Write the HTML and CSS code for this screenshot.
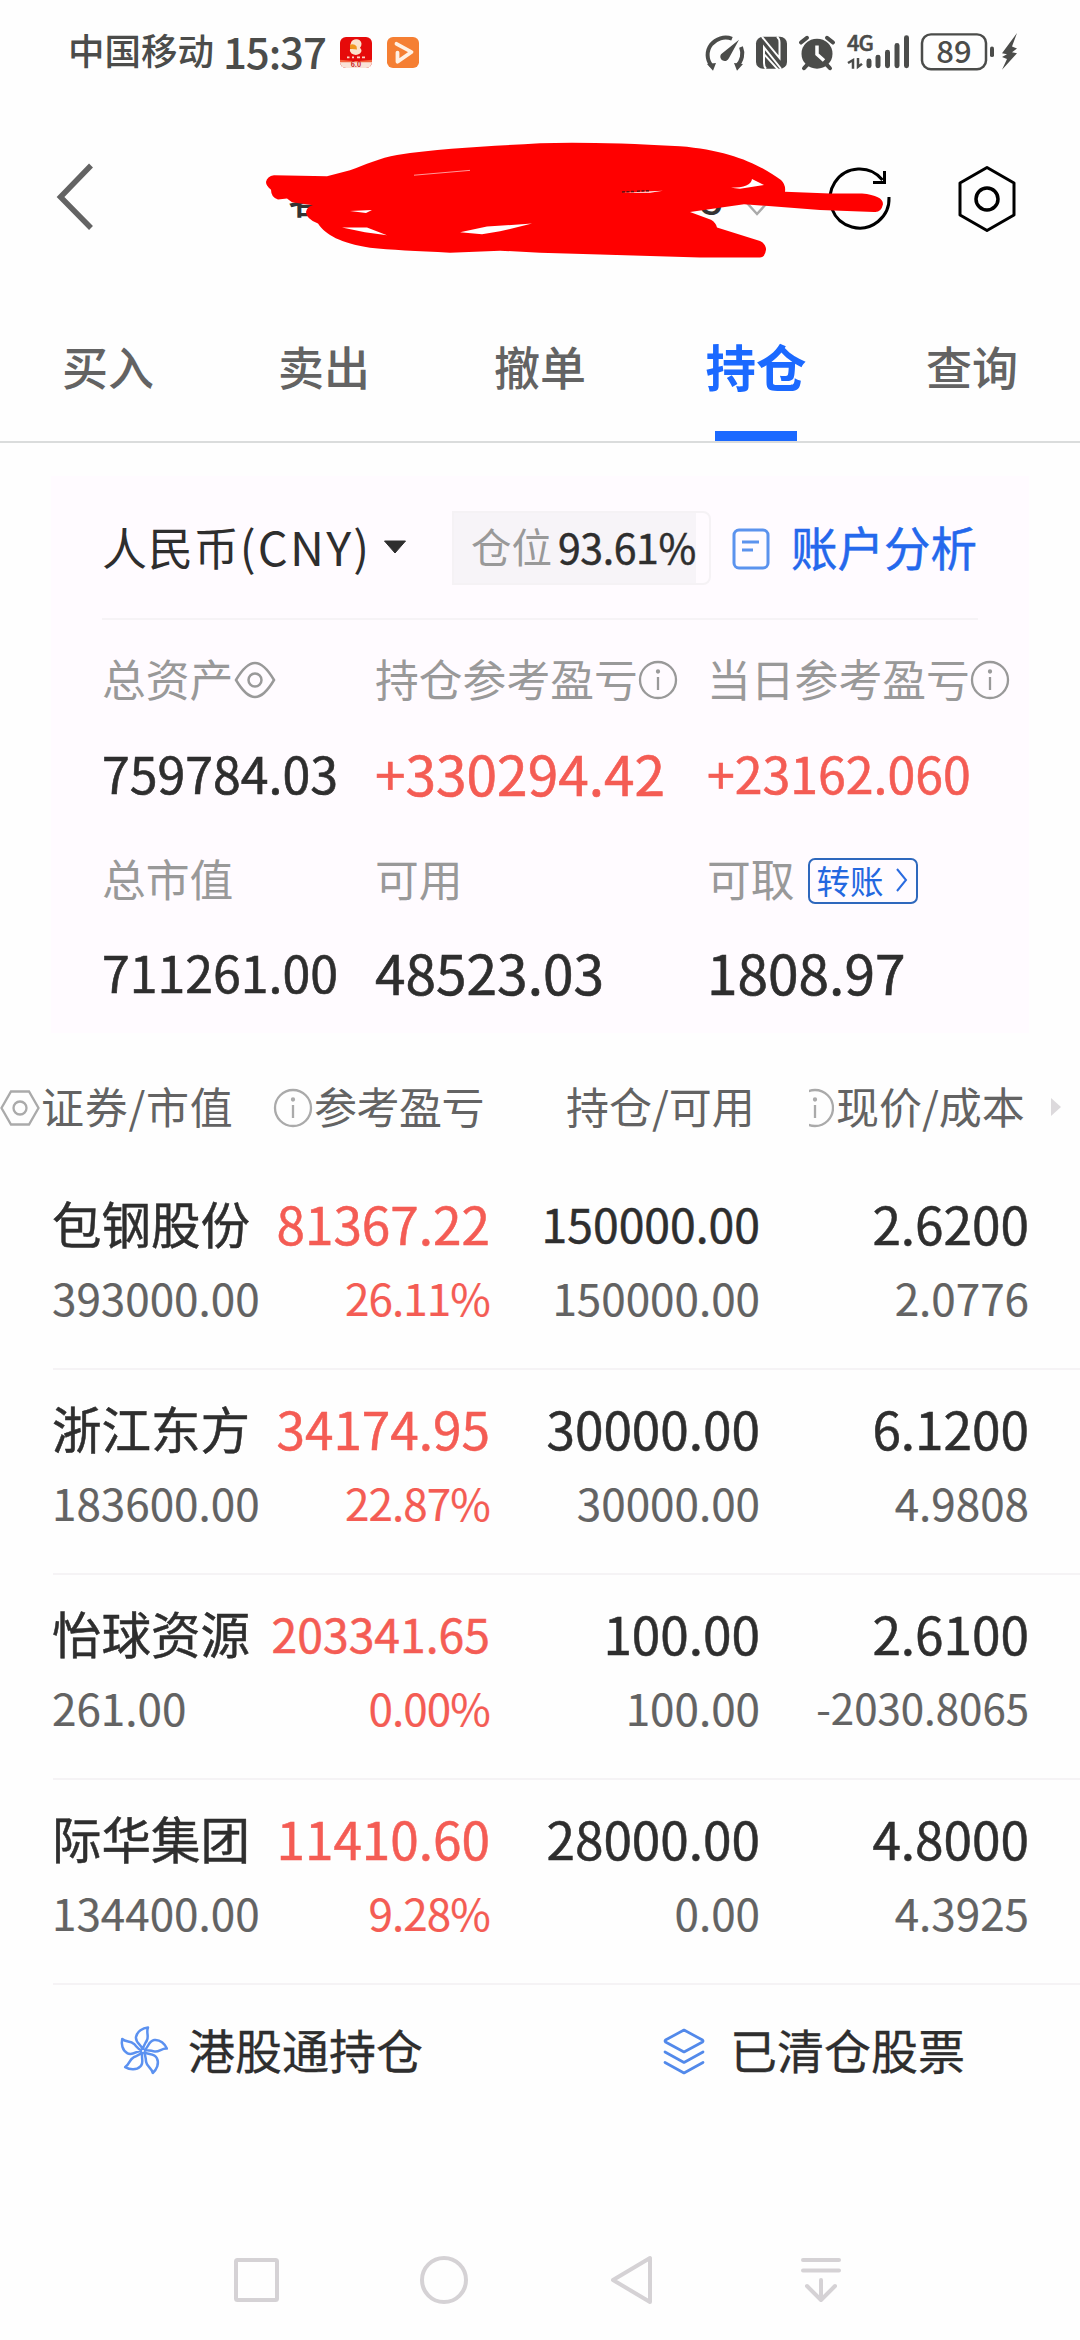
FILE: index.html
```html
<!DOCTYPE html>
<html lang="zh-CN">
<head>
<meta charset="utf-8">
<title>持仓</title>
<link rel="stylesheet" href="styles.css">
</head>
<body>
<div class="screen">
  <div class="status">
    <span class="carrier">中国移动</span><span class="clock">15:37</span>
    <svg class="app-red" width="32" height="31" viewBox="0 0 32 32" preserveAspectRatio="none"><rect width="32" height="32" rx="6" fill="#e60a0a"/><path d="M0 25h32v1a6 6 0 0 1-6 6H6a6 6 0 0 1-6-6z" fill="#f9e3d8"/><path d="M0 23.500L16 25L32 23.500V26H0z" fill="#f2613c"/><path d="M11 6C12 1 21 1 21.500 7Q21.500 10 20 11Q23 14 20 17Q16 20 11.500 17Q9 15 10 12.500L15 12L10 9z" fill="#fbe3cc"/><path d="M10 8Q14 6.500 16.500 9.500L17 13L10 12z" fill="#f0961e"/><path d="M7 21h2.500M12 21h2M17 21h3M22 21h3" stroke="#fbd3c4" stroke-width="1.800"/><text x="16" y="31" font-size="7" text-anchor="middle" class="app-ver">6.0</text></svg>
    <svg class="app-orange" width="32" height="31" viewBox="0 0 32 32" preserveAspectRatio="none"><rect width="32" height="32" rx="6" fill="#f57f33"/><path d="M9.500 7L24.500 15.500L10.500 25.500V16" fill="none" stroke="#fff1e4" stroke-width="3.800" stroke-linecap="round" stroke-linejoin="round"/></svg>
    <svg class="status-icons" width="320" height="44" viewBox="702 33.060 320 45.450" preserveAspectRatio="none" fill="none" stroke="#4b4c4a">
      <path d="M711.500 68A18 18 0 0 1 732 40M741 48.500A18 18 0 0 1 737 68" stroke-width="4"/><path d="M707 66l9-1-3 8zM743 66l-9-1 3 8z" fill="#4b4c4a" stroke="none"/><path d="M739 41L729 60A4.500 4.500 0 1 1 721 56z" fill="#4b4c4a" stroke="none"/>
      <rect x="756" y="38" width="31" height="33" rx="7" fill="#4b4c4a" stroke="none"/><path d="M762 38L779.500 60V44Q779.500 40 777 38M781 71L764 49V65Q764 69 766 71M764 56L778 72" stroke="#fff" stroke-width="2"/>
      <circle cx="817" cy="55.500" r="15.500" fill="#4b4c4a" stroke="none"/><path d="M801 44l6-5M833 44l-6-5M808 66l-4 4.500M826 66l4 4.500" stroke-width="4" stroke-linecap="round"/><path d="M817 47v9l7 6.500" stroke="#fff" stroke-width="3.500"/>
      <text x="847" y="53" class="net">4G</text>
      <path d="M853 71V62l-5 3M858 60v9l4-3" stroke-width="2.500"/>
      <path d="M869 63v5M878 59v9M887.500 54v14M897 47v21M906.500 39v29" stroke-width="5" stroke-linecap="round"/>
      <rect x="922" y="35.500" width="64" height="36" rx="9" stroke-width="2.500"/><path d="M992 50v7" stroke-width="4" stroke-linecap="round"/>
      <text x="954" y="65" text-anchor="middle" class="batt">89</text>
      <path d="M1017 34l-15 21 5 1-5 3 5 2-5 11 15-17-5-1 5-4-5-2z" fill="#4b4c4a" stroke="none"/>
    </svg>
  </div>

  <div class="titlebar">
    <svg width="1080" height="150" viewBox="0 130 1080 150" fill="none">
      <path d="M91 165.500L60.500 197L91 228" stroke="#636363" stroke-width="5.500"/>
      <text x="288" y="214" class="acct">客</text><text x="699" y="214" class="acct">8</text>
      <path d="M747 203l10 11 10-11" stroke="#aaa" stroke-width="2.500"/>
      <path d="M882.500 180A29.500 29.500 0 1 0 889 197" stroke="#000" stroke-width="3"/><path d="M884.500 171v11.500h-11.500" stroke="#000" stroke-width="3"/>
      <path d="M987 167.500L1014 183V215L987 230.500L960 215V183z" stroke="#000" stroke-width="3" stroke-linejoin="round"/><circle cx="987" cy="199" r="11" stroke="#000" stroke-width="3.500"/>
      <g transform="scale(1 .968)">
      <path d="M274 181L327 182L350 176C365 170 380 163 397 160C440 153 490 151 540 148Q590 146 680 151C730 155 760 170 781 186Q786 191 785 198L830 200L862 200Q883 202 883 211Q881 220 874 219L820 217L744 211L690 219L711 227Q716 230 717 235L760 249Q766 252 766 258Q765 266 760 266L700 266L600 263L540 261L500 259L450 261Q400 259 370 256C340 251 326 243 318 231Q306 226 306 219Q307 213 313 212L292 209L287 205L278 206Q271 204 271 196Q266 192 266 188Q267 182 274 181z" fill="#f00"/>
      <path d="M342 235H367L387 243L365 240zM460 240L487 234L532 231L500 239L482 242zM350 218L372 217L366 220zM752 185L764 191L740 195L731 194Q751 194 752 185zM621 199L663 197L650 199zM704 195L717 195z" fill="#fff"/><path d="M414 181L470 176" stroke="#ff9c9c"/>
      </g>
      <path d="M622 192l12-.6M637 191.200l13-.6" stroke="#5a1010" stroke-width="1.500" stroke-dasharray="3 1.500"/>
    </svg>
  </div>

  <nav class="tabs"><span>买入</span><span>卖出</span><span>撤单</span><span class="active">持仓</span><span>查询</span></nav>

  <section class="card">
    <div class="cardtop">
      <span class="cur">人民币<span class="code">(CNY)</span></span><svg class="tri" width="24" height="14" viewBox="0 0 24 14"><path d="M1.500 1h21L12 13z" fill="#2e2e2e" stroke="#2e2e2e" stroke-linejoin="round"/></svg>
      <div class="ratio"><div class="fill"><span class="rl">仓位</span><span class="rv">93.61%</span></div></div>
      <svg class="note" width="38" height="42" viewBox="0 0 38 42" fill="none" stroke="#5b93ee" stroke-width="3"><rect x="2" y="2" width="34" height="38" rx="5"/><path d="M10 14h17M10 22h11"/></svg>
      <span class="link">账户分析</span>
    </div>
    <div class="grid labels">
      <div>总资产<svg class="eye" width="42" height="38" viewBox="0 0 42 38" fill="none" stroke="#999" stroke-width="2.500"><path d="M2 19Q12 2 21 2T40 19Q30 36 21 36T2 19z"/><circle cx="21" cy="19" r="6.500"/></svg></div>
      <div>持仓参考盈亏<svg class="info" width="40" height="40" viewBox="0 0 40 40" fill="none" stroke="#999" stroke-width="2.300"><circle cx="20" cy="20" r="18"/><path d="M20 17v13"/><circle cx="20" cy="11.500" r="1" /></svg></div>
      <div>当日参考盈亏<svg class="info" width="40" height="40" viewBox="0 0 40 40" fill="none" stroke="#999" stroke-width="2.300"><circle cx="20" cy="20" r="18"/><path d="M20 17v13"/><circle cx="20" cy="11.500" r="1" /></svg></div>
    </div>
    <div class="grid values"><div>759784.03</div><div class="big red">+330294.42</div><div class="red">+23162.060</div></div>
    <div class="grid labels second"><div>总市值</div><div>可用</div><div>可取<span class="transfer">转账<svg width="12" height="24" viewBox="0 0 12 24" fill="none" stroke="#2a6be0" stroke-width="2"><path d="M1 1l9 11L1 23"/></svg></span></div></div>
    <div class="grid values last"><div>711261.00</div><div class="big">48523.03</div><div class="big">1808.97</div></div>
  </section>

  <div class="thead">
    <div class="h1"><svg width="40" height="40" viewBox="0 0 40 40" fill="none" stroke="#aaa" stroke-width="2.300"><path d="M11 3.500H29L38.500 20L29 36.500H11L1.500 20z"/><circle cx="20" cy="20" r="6.500"/></svg><span>证券/市值</span></div>
    <div class="h2"><svg width="40" height="40" viewBox="0 0 40 40" fill="none" stroke="#aaa" stroke-width="2.300"><circle cx="20" cy="20" r="18"/><path d="M20 17v13"/><circle cx="20" cy="11.500" r="1"/></svg><span>参考盈亏</span></div>
    <div class="h3">持仓/可用</div>
    <div class="h4"><svg width="25" height="40" viewBox="14 0 25 40" fill="none" stroke="#aaa" stroke-width="2.300"><circle cx="20" cy="20" r="18"/><path d="M20 17v13"/><circle cx="20" cy="11.500" r="1"/></svg><span>现价/成本</span></div>
    <svg class="more" width="11" height="18" viewBox="0 0 11 18"><path d="M0 0l10 9-10 9z" fill="#dcd9dc"/></svg>
  </div>

  <div class="rows">
    <div class="row"><div class="top"><span class="name">包钢股份</span><span class="red">81367.22</span><span class="sm">150000.00</span><span>2.6200</span></div><div class="sub"><span>393000.00</span><span class="red">26.11%</span><span>150000.00</span><span>2.0776</span></div></div>
    <div class="row"><div class="top"><span class="name">浙江东方</span><span class="red">34174.95</span><span>30000.00</span><span>6.1200</span></div><div class="sub"><span>183600.00</span><span class="red">22.87%</span><span>30000.00</span><span>4.9808</span></div></div>
    <div class="row"><div class="top"><span class="name">怡球资源</span><span class="red sm">203341.65</span><span>100.00</span><span>2.6100</span></div><div class="sub"><span>261.00</span><span class="red">0.00%</span><span>100.00</span><span class="xs">-2030.8065</span></div></div>
    <div class="row"><div class="top"><span class="name">际华集团</span><span class="red">11410.60</span><span>28000.00</span><span>4.8000</span></div><div class="sub"><span>134400.00</span><span class="red">9.28%</span><span>0.00</span><span>4.3925</span></div></div>
  </div>

  <div class="links">
    <div class="hk"><svg width="50" height="50" viewBox="-25 -25 50 50" fill="none" stroke="#5b91f0" stroke-width="2.500" stroke-linejoin="round"><defs><path id="petal" d="M0 -1C-1 -6 -8 -8 -7 -14C-6 -20 0 -23 5 -23.500C3 -19 6 -15 4 -11C3 -8 0 -6 0 -1"/></defs><use href="#petal"/><use href="#petal" transform="rotate(72)"/><use href="#petal" transform="rotate(144)"/><use href="#petal" transform="rotate(216)"/><use href="#petal" transform="rotate(288)"/></svg><span>港股通持仓</span></div>
    <div class="closed"><svg width="42" height="48" viewBox="0 0 42 48" fill="none" stroke="#5289ea" stroke-width="2.700" stroke-linejoin="round" stroke-linecap="round"><path d="M21 3L39.500 13Q40.500 14 39.500 15L21 25L2.500 15Q1.500 14 2.500 13zM2 25l19 10.500L40 25M2 35.500L21 46L40 35.500"/></svg><span>已清仓股票</span></div>
  </div>

  <div class="sysnav">
    <svg width="620" height="54" viewBox="230 2254 620 54" fill="none" stroke="#d5d2d5" stroke-width="4" stroke-linejoin="round" stroke-linecap="round"><rect x="236" y="2261" width="41" height="40" rx="1.500"/><circle cx="444" cy="2281" r="22"/><path d="M613 2281L650 2259V2303z"/><path d="M803 2261H839M803 2271.500H839M821 2281V2300M807 2287L821 2301L835 2287"/></svg>
  </div>
</div>
</body>
</html>
```
FILE: styles.css
```css
* { box-sizing: border-box; }
body { margin: 0; background: #fefefe; color: #2e2e2e; font-family: "Noto Sans CJK SC", "Noto Sans", sans-serif; }
svg { display: block; flex: none; }
.screen { width: 1080px; height: 2340px; overflow: hidden; display: flex; flex-direction: column; white-space: nowrap; }
.red { color: #f45c54; }

.status { height: 130px; padding: 32px 58px 0 68px; display: flex; align-items: flex-start; color: #4b4c4a; }
.carrier { font-size: 36.5px; line-height: 40px; width: 155px; font-weight: 500; margin-top: -2px; }
.clock { font-size: 42px; line-height: 40px; width: 117px; font-weight: 500; letter-spacing: -1.1px; margin-top: -1px; }
.app-red { margin-top: 5px; }
.app-orange { margin: 5px 0 0 15px; }
.app-ver { fill: #c22; font-weight: 700; stroke: none; }
.status-icons { margin-left: auto; overflow: visible; }
.net { font: 500 22px "Noto Sans CJK SC", sans-serif; fill: #4b4c4a; stroke: #4b4c4a; stroke-width: .5px; letter-spacing: -1px; }
.batt { font: 500 31px "Noto Sans CJK SC", sans-serif; fill: #4b4c4a; stroke: none; }

.titlebar { height: 150px; }
.acct { font: 500 42px "Noto Sans CJK SC", sans-serif; fill: #333; }

.tabs { height: 163px; display: grid; grid-template-columns: repeat(5, 216px); border-bottom: 2px solid #dadcdc; text-align: center; font-size: 46px; line-height: 152px; color: #636363; font-weight: 500; }
.tabs span { height: 161px; padding-top: 9px; }
.tabs .active { color: #1b69ff; font-weight: 700; font-size: 50.5px; background: linear-gradient(#1b69ff, #1b69ff) center bottom / 82px 10px no-repeat; }

.card { width: 978px; height: 557px; margin: 33px 0 0 51px; background: #fffbff; padding: 0 0 0 51px; }
.cardtop { width: 876px; height: 144px; border-bottom: 2px solid #f6f3f6; display: flex; align-items: center; }
.cur { width: 281px; font-size: 45px; line-height: 60px; letter-spacing: .9px; margin-top: -2px; }
.code { letter-spacing: 2.2px; font-size: 47px; }
.ratio { margin-left: 45px; width: 259px; height: 74px; margin-top: 2px; border: 2px solid #f5f2f5; border-radius: 0 8px 8px 0; }
.fill { width: 242px; height: 70px; background: #f7f4f8; display: flex; align-items: center; padding-left: 17px; line-height: 66px; }
.rl { font-size: 40.5px; color: #999; width: 87px; margin-top: -5px; }
.rv { font-size: 41px; letter-spacing: -.4px; margin-top: -5px; -webkit-text-stroke: .5px; }
.note { margin: 3px 0 0 21px; }
.link { margin: -3px 0 0 21px; font-size: 46.5px; color: #2468ec; -webkit-text-stroke: .5px; }
.grid { display: grid; grid-template-columns: 273px 332px 1fr; }
.labels { height: 60px; margin-top: 28px; line-height: 60px; font-size: 43.8px; color: #999; }
.labels div { display: flex; align-items: center; }
.eye { margin: 4px 0 0 1px; }
.info { margin: 4px 0 0 0; }
.values { height: 80px; margin-top: 24px; line-height: 80px; font-size: 50px; -webkit-text-stroke: .6px; }
.values.last { margin-top: 23px; }
.big { font-size: 55px; }
.values + .labels { margin-top: 36px; }
.transfer { margin: 5px 0 0 13px; width: 110px; height: 46px; border: 2px solid #2e68bd; border-radius: 7px; padding: 0 0 2px 7px; display: flex; align-items: center; gap: 12px; font-size: 33.5px; line-height: 36px; color: #2468e0; }

.thead { height: 128px; display: flex; align-items: flex-start; padding-top: 42px; font-size: 43px; line-height: 60px; color: #636363; }
.thead svg { margin-top: 13px; }
.thead div { display: flex; }
.h1 { width: 273px; }
.h1 span { margin-left: 1px; letter-spacing: .7px; }
.h2 { width: 293px; }
.h2 span { margin-left: 1px; letter-spacing: -.5px; }
.h3 { width: 243px; }
.h4 { width: 242px; }
.h4 span { margin-left: 2px; }
.thead .more { margin-top: 23px; }

.row { margin-left: 53px; height: 205px; border-bottom: 2px solid #f5f3f5; }
.rows .row:first-child { height: 209px; padding-top: 4px; }
.top, .sub { display: grid; grid-template-columns: 218px 219px 270px 269px; text-align: right; line-height: 60px; }
.top { height: 102px; padding-top: 28px; font-size: 51.3px; -webkit-text-stroke: .5px; }
.top .name { font-size: 49.5px; text-align: left; margin-left: -1px; }
.top .sm { font-size: 46.3px; }
.sub { height: 60px; font-size: 44px; color: #636363; -webkit-text-stroke: .2px; }
.sub span:first-child { text-align: left; margin-left: -1px; }
.sub .red { color: #f45c54; letter-spacing: -.9px; }
.sub .xs { font-size: 42px; }

.links { height: 136px; display: flex; align-items: center; font-size: 47px; -webkit-text-stroke: .3px; padding-bottom: 4px; }
.links div { display: flex; align-items: center; }
.links span { margin-top: -6px; }
.hk { padding-left: 118px; gap: 20px; width: 663px; }
.closed { gap: 25px; }
.sysnav { margin-top: 132px; padding-left: 230px; }
```
